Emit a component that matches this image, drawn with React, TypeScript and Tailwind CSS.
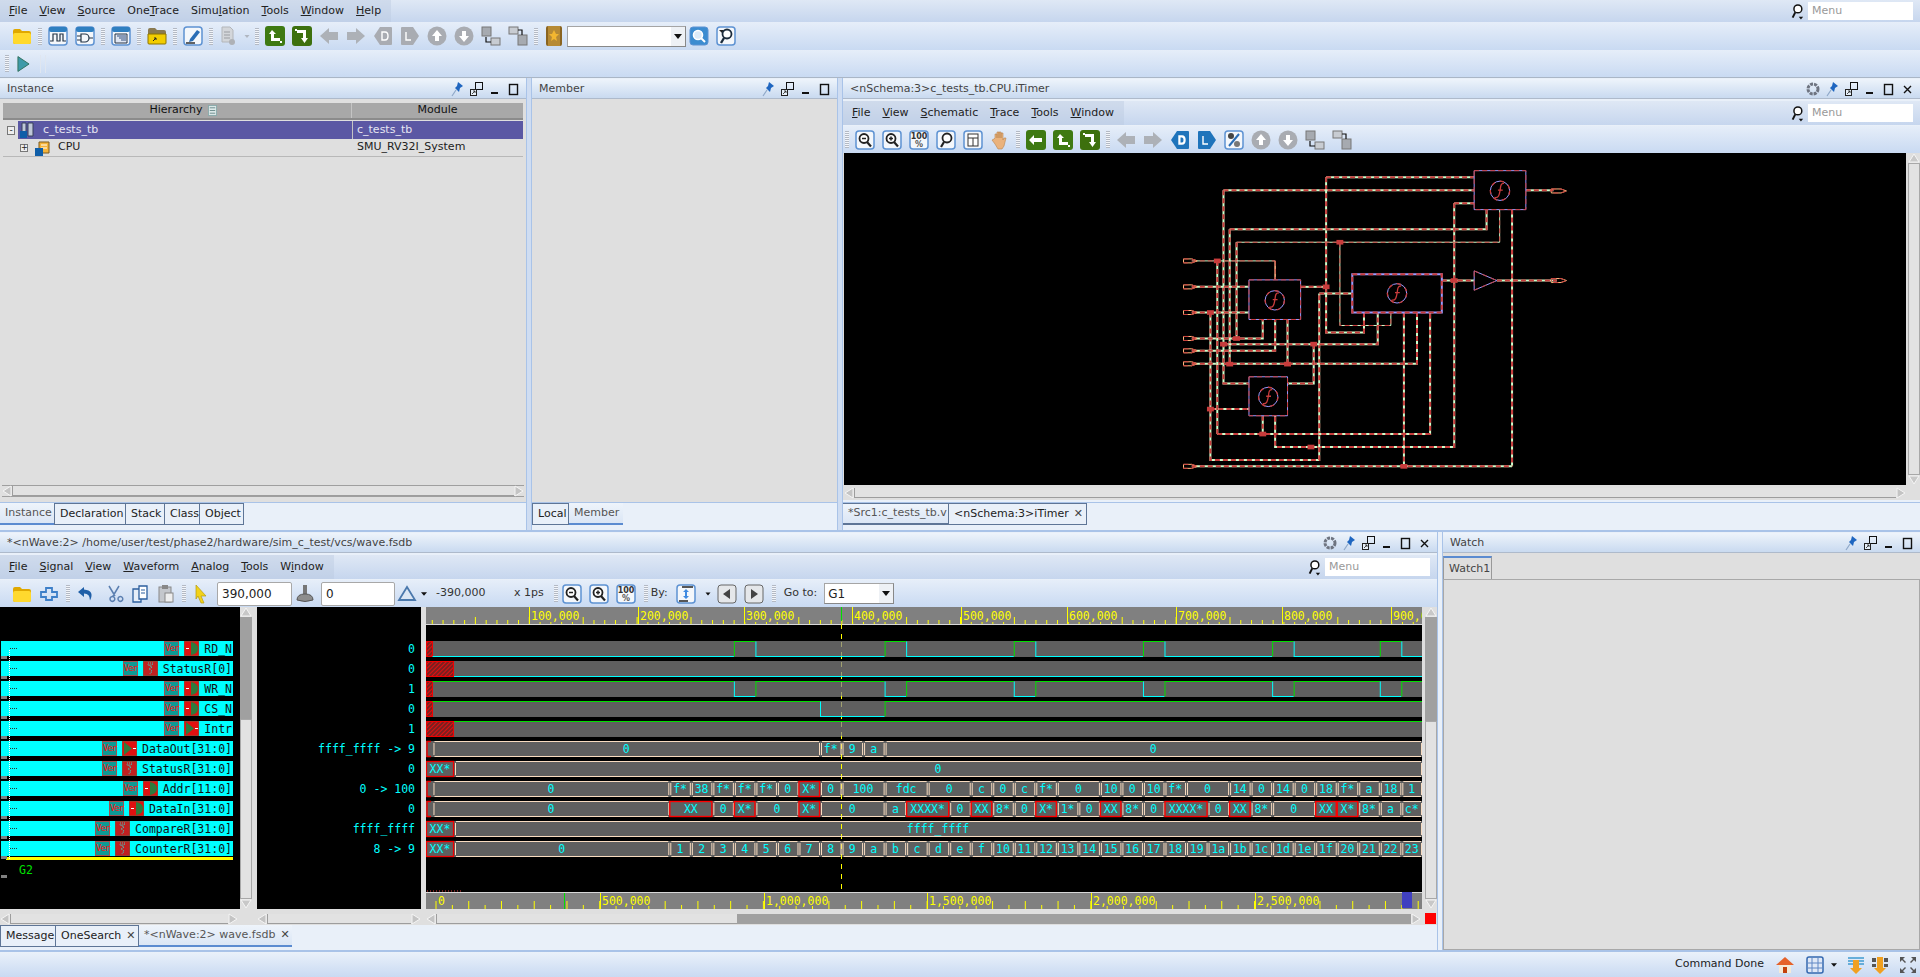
import React from "react";

const sans = "font-['DejaVu_Sans',sans-serif]";
const mono = "font-['DejaVu_Sans_Mono',monospace]";

const frame = <rect x="1" y="1" width="18" height="18" rx="3" fill="#f4f7fb" stroke="#5d92d2" strokeWidth="1.5" />;
const glass = (extra?: React.ReactNode) => (
  <>
    {frame}
    <circle cx="9" cy="8.5" r="4.5" fill="#fff" stroke="#222" strokeWidth="1.8" />
    <path d="M12 12l4 4.5" stroke="#222" strokeWidth="2.2" />
    {extra}
  </>
);

const icons: Record<string, React.ReactNode> = {
  folder: <><path d="M1 5q0-2 2-2h5l2 2h7q2 0 2 2v9q0 2-2 2H3q-2 0-2-2z" fill="#e0a800" /><path d="M1 9q0-2 2-2h14q2 0 2 2v7q0 2-2 2H3q-2 0-2-2z" fill="#ffd92e" /></>,
  wave: <>{frame}<rect x="1" y="1" width="18" height="5" rx="2" fill="#2f7fc0" /><path d="M2 15h3V8h4v7h3V8h3v7h3" fill="none" stroke="#234" strokeWidth="1.2" /></>,
  gate: <>{frame}<rect x="1" y="1" width="18" height="5" rx="2" fill="#2f7fc0" /><path d="M6 8h4a4 4 0 010 8H6zM2 10h4M2 14h4M14 12h4" fill="none" stroke="#234" strokeWidth="1.2" /></>,
  list: <>{frame}<rect x="1" y="1" width="18" height="5" rx="2" fill="#2f7fc0" /><path d="M4 8h12v9H4z" fill="#dfe6f3" stroke="#234" /><path d="M6 10h9M8 12h7M10 14h5" stroke="#35507f" strokeWidth="1.2" /></>,
  ofolder: <><path d="M1 4q0-2 2-2h5l2 2h7q2 0 2 2v11H1z" fill="#8a7a50" /><path d="M1 8h18v9q0 1-1 1H2q-1 0-1-1z" fill="#f2cd00" stroke="#8d7400" /><path d="M6 15l3-3M7 12h2v2" stroke="#222" fill="none" /></>,
  edit: <>{frame}<path d="M7 13l7-9 3 2-7 9-4 1z" fill="#2a6db5" /><path d="M3 17h9" stroke="#222" strokeWidth="1.4" /></>,
  doc: <><path d="M3 1h8l3 3v12H3z" fill="#d3d6da" stroke="#b3b6ba" /><path d="M5 6h6M5 9h6M5 12h6" stroke="#9a9da2" /><circle cx="13" cy="16" r="3" fill="#aeb1b6" /></>,
  grayDrop: <path d="M5 8h10l-5 6z" fill="#b0b6c0" />,
  gUp: <><rect x="0" y="0" width="20" height="20" rx="3" fill="#3f7a12" /><path d="M7 4l-3 4h2v7h9v-3H9V8h2z" fill="#fff" /><rect x="15" y="15" width="2" height="2" fill="#fff" /></>,
  gDown: <><rect x="0" y="0" width="20" height="20" rx="3" fill="#3d700e" /><path d="M5 4h9v8h2l-3.5 5L9 12h2V7H5z" fill="#fff" /><rect x="3" y="3" width="2" height="2" fill="#fff" /></>,
  gLeft: <><rect x="0" y="0" width="20" height="20" rx="3" fill="#3f7a12" /><path d="M3 10l5-5v3h8v4H8v3z" fill="#fff" /></>,
  aLeft: <path d="M1 10l9-8v4h9v8h-9v4z" fill="#adb1b7" />,
  aRight: <path d="M19 10l-9-8v4H1v8h9v4z" fill="#adb1b7" />,
  tagD: <><path d="M1 10l6-9h11q1 0 1 1v16q0 1-1 1H7z" fill="#a9acb2" /><path d="M9 6h3q3 0 3 4t-3 4H9z" fill="none" stroke="#fff" strokeWidth="1.4" /></>,
  tagL: <><path d="M19 10l-6-9H2Q1 1 1 2v16q0 1 1 1h11z" fill="#a9acb2" /><path d="M6 6v8h5" fill="none" stroke="#fff" strokeWidth="1.4" /></>,
  tagDb: <><path d="M1 10l6-9h11q1 0 1 1v16q0 1-1 1H7z" fill="#1f74bb" /><path d="M9 6h3q3 0 3 4t-3 4H9z" fill="#fff" stroke="#fff" strokeWidth="1.4" /><path d="M10.500 7.500h1.500q1.500 0 1.500 2.500t-1.500 2.500h-1.500z" fill="#1f74bb" /></>,
  tagLb: <><path d="M19 10l-6-9H2Q1 1 1 2v16q0 1 1 1h11z" fill="#1f74bb" /><path d="M6 6v8h5" fill="none" stroke="#fff" strokeWidth="1.4" /></>,
  cUp: <><circle cx="10" cy="10" r="9.5" fill="#a9acb2" /><path d="M10 4l5 6h-3v5H8v-5H5z" fill="#fff" /></>,
  cDown: <><circle cx="10" cy="10" r="9.5" fill="#a9acb2" /><path d="M10 16l5-6h-3V5H8v5H5z" fill="#fff" /></>,
  hierA: <><rect x="1" y="1" width="9" height="9" fill="#a6aab0" stroke="#777" /><rect x="10" y="12" width="9" height="7" fill="#c8ccd2" stroke="#777" /><path d="M5 11v5h5" fill="none" stroke="#111" strokeWidth="1.2" /></>,
  hierB: <><rect x="1" y="1" width="9" height="7" fill="#c8ccd2" stroke="#777" /><rect x="10" y="9" width="9" height="10" fill="#a6aab0" stroke="#777" /><path d="M10 4h4v5" fill="none" stroke="#111" strokeWidth="1.2" /></>,
  book: <><rect x="2" y="0" width="16" height="20" rx="2" fill="#8a6420" /><rect x="4" y="0" width="12" height="20" fill="#b68a35" /><path d="M10 4l2 4h3l-3 3 1 4-3-2-3 2 1-4-3-3h3z" fill="#f2b630" /></>,
  findQ: <><rect x="1" y="1" width="18" height="18" rx="3" fill="#3c8cd0" stroke="#5d92d2" /><circle cx="9" cy="9" r="4.5" fill="#dcebf8" stroke="#fff" strokeWidth="1.6" /><path d="M12 12l4 4" stroke="#fff" strokeWidth="2" /></>,
  findP: <>{frame}<path d="M3 4h5l-2 3z" fill="#222" /><circle cx="11" cy="8" r="4.5" fill="#fff" stroke="#1b2b3b" strokeWidth="1.8" /><path d="M8 12l-3 5" stroke="#1b2b3b" strokeWidth="2.4" /></>,
  zOut: glass(<path d="M7 8.5h4" stroke="#222" strokeWidth="1.5" />),
  zIn: glass(<path d="M7 8.5h4M9 6.5v4" stroke="#222" strokeWidth="1.5" />),
  z100: <>{frame}<text x="10" y="9" textAnchor="middle" fontSize="8" fontWeight="700" fontFamily="DejaVu Sans" fill="#333">100</text><text x="10" y="17" textAnchor="middle" fontSize="8" fontWeight="700" fontFamily="DejaVu Sans" fill="#555">%</text></>,
  zFit: <>{frame}<circle cx="11" cy="8" r="4.5" fill="#fff" stroke="#222" strokeWidth="1.8" /><path d="M8 12l-3 5" stroke="#222" strokeWidth="2.2" /></>,
  zBox: <>{frame}<rect x="5" y="4" width="10" height="12" fill="#fff" stroke="#333" /><path d="M5 8h10M10 8v8" stroke="#333" /></>,
  hand: <path d="M5 8V4h2v4V2h2v6V2h2v6V3h2v7l1-2h2l-2 8-2 3H8l-3-5-3-4 2-1z" fill="#eab27c" stroke="#b9844f" strokeWidth=".6" />,
  trace: <>{frame}<circle cx="7" cy="6" r="3" fill="#444" /><path d="M5 16L15 4" stroke="#2a6db5" strokeWidth="2" /><circle cx="13" cy="14" r="3" fill="#777" /></>,
  refresh: <path d="M2 8h5V4h6v4h5v5h-5v3H7v-3H2z" fill="none" stroke="#3d7fc8" strokeWidth="1.8" />,
  undo: <path d="M8 3L2 8l6 5V9.5q6 0 6 7 5-10-6-11z" fill="#1f5fa8" />,
  cut: <path d="M5 2l6 10M15 2L9 12M6 15a2.4 2.4 0 100-.1zM14 15a2.4 2.4 0 100-.1z" fill="none" stroke="#5b7fb0" strokeWidth="1.5" />,
  copy: <><path d="M3 5h8v13H3z" fill="#e6eef8" stroke="#2c5f9e" strokeWidth="1.3" /><path d="M9 2h8v13H9z" fill="#fff" stroke="#2c5f9e" strokeWidth="1.3" /><path d="M11 6h4M11 9h4" stroke="#2c5f9e" /></>,
  paste: <><rect x="3" y="3" width="12" height="15" fill="#c4c7cc" stroke="#888" /><rect x="6" y="1" width="6" height="4" fill="#888" /><rect x="9" y="9" width="8" height="9" fill="#eee" stroke="#888" /></>,
  cursor: <path d="M5 1l10 11h-5l3 7-3 0-3-7-2 3z" fill="#f2d21a" stroke="#b59b10" strokeWidth=".7" />,
  gauge: <><rect x="8" y="1" width="4" height="9" fill="#777" /><path d="M2 16q0-6 8-6t8 6q-8 3-16 0z" fill="#8d8d8d" stroke="#555" /></>,
  delta: <path d="M10 3l8 13H2z" fill="#dbe6f4" stroke="#4a78ac" strokeWidth="1.8" />,
  blackDrop: <path d="M5 7h10l-5 6z" fill="#111" />,
  byIcon: <>{frame}<path d="M6 3h11M3 17h9" stroke="#222" strokeWidth="1.6" /><path d="M10 5l3 3h-2v4h2l-3 3-3-3h2V8H7z" fill="#3f8ae0" /></>,
  prev: <><rect x="1" y="1" width="18" height="18" rx="3" fill="#e5e7ea" stroke="#666" /><path d="M13 5v10l-7-5z" fill="#444" /></>,
  next: <><rect x="1" y="1" width="18" height="18" rx="3" fill="#e5e7ea" stroke="#666" /><path d="M7 5v10l7-5z" fill="#444" /></>,
  home: <><path d="M1 10l9-8 9 8z" fill="#e5622a" /><rect x="4" y="10" width="12" height="8" fill="#f3ead8" /><rect x="8" y="12" width="4" height="6" fill="#c2410c" /></>,
  grid: <><rect x="2" y="2" width="16" height="16" rx="2" fill="#dfe8f7" stroke="#3468b0" strokeWidth="1.5" /><path d="M7 3v14M13 3v14M3 8h14M3 13h14" stroke="#5e86c4" /></>,
  arr1: <><path d="M2 3h16M2 6h16M2 9h16" stroke="#3f9ad0" strokeWidth="1.6" /><path d="M7 5h6v8h3l-6 6-6-6h3z" fill="#f0a020" /></>,
  arr2: <><path d="M2 3h4v4H2zM14 3h4v4h-4zM2 9h4v3H2zM14 9h4v3h-4z" fill="#555" /><path d="M7 2h6v11h3l-6 6-6-6h3z" fill="#f0a020" /></>,
  expand: <path d="M2 2h5L5 4l3 3-1 1-3-3-2 2zM18 2v5l-2-2-3 3-1-1 3-3-2-2zM2 18v-5l2 2 3-3 1 1-3 3 2 2zM18 18h-5l2-2-3-3 1-1 3 3 2-2z" fill="#555" />,
};

function Ico({ name, className = "" }: { name: string; className?: string }) {
  return (
    <svg viewBox="0 0 20 20" className={`w-[20px] h-[20px] shrink-0 ${className}`}>
      {icons[name]}
    </svg>
  );
}

function Grip({ className = "" }: { className?: string }) {
  return <div className={`w-[4px] h-[17px] -mx-[1px] shrink-0 bg-[repeating-linear-gradient(180deg,#b3b9c4_0,#b3b9c4_1px,#f2f5fa_1px,#f2f5fa_2px)] ${className}`} />;
}

function Toolbar({ items, className = "" }: { items: string[]; className?: string }) {
  return (
    <div className={`flex items-center gap-[7px] ${className}`}>
      {items.map((it, i) => (it === "|" ? <Grip key={i} /> : <Ico key={i} name={it} />))}
    </div>
  );
}

function MenuBar({ items, className = "", children }: { items: [string, string, string][]; className?: string; children?: React.ReactNode }) {
  return (
    <div className={`flex items-center text-[11px] text-[#222] bg-gradient-to-b from-[#dfe8f5] to-[#c6d6ee] ${className}`}>
      <div className="flex items-center h-full bg-[#b9c8de]/40 pl-[9px] pr-[10px]">
        {items.map(([a, u, b], i) => (
          <span key={i} className="whitespace-pre mr-[12px] last:mr-0">
            {a}
            <span className="underline">{u}</span>
            {b}
          </span>
        ))}
      </div>
      {children}
    </div>
  );
}

function MenuSearch() {
  return (
    <div className="ml-auto flex items-center pr-[7px] h-full">
      <svg viewBox="0 0 16 18" className="w-[14px] h-[17px] mr-[4px]">
        <circle cx="9" cy="6" r="4.5" fill="#fff" stroke="#111" strokeWidth="1.7" />
        <path d="M6 10l-3 6" stroke="#111" strokeWidth="2.2" />
        <path d="M10 15h5l-2.5 3z" fill="#111" />
      </svg>
      <div className="w-[105px] h-[18px] bg-white text-[#999] pl-[4px] leading-[18px] text-[11px]">Menu</div>
    </div>
  );
}

function HeaderBtn({ kind }: { kind: string }) {
  return (
    <svg viewBox="0 0 14 16" className="w-[14px] h-[16px]">
      {kind === "gear" && <><circle cx="7" cy="8" r="5" fill="none" stroke="#6e7480" strokeWidth="3" strokeDasharray="3 1" /></>}
      {kind === "pin" && <><path d="M8 1l5 4-3 2-1 4-4-4 2-2z" fill="#1f66c0" /><path d="M6 9l-4 6" stroke="#8fa8c8" strokeWidth="1.2" /></>}
      {kind === "float" && <><rect x="6.5" y="1.5" width="7" height="7" fill="none" stroke="#111" /><rect x="1.5" y="8.5" width="6" height="6" fill="#e7f0f9" stroke="#222" /><path d="M3 13l3-3M4 10h2v2" stroke="#222" fill="none" strokeWidth=".8" /></>}
      {kind === "min" && <rect x="3" y="11" width="7" height="2" fill="#111" />}
      {kind === "max" && <rect x="2.5" y="3.5" width="8" height="10" fill="none" stroke="#111" strokeWidth="1.4" />}
      {kind === "close" && <path d="M3 5l7 7M10 5l-7 7" stroke="#111" strokeWidth="1.4" />}
    </svg>
  );
}

function Header({ title, btns }: { title: string; btns: string[] }) {
  return (
    <div className="h-[20px] mt-px shrink-0 flex items-center pl-[7px] pr-[5px] text-[11px] text-[#444] bg-gradient-to-b from-[#eef4fb] to-[#c9daf0] border-b border-[#aebacb]">
      <span className="whitespace-pre pt-[2px]">{title}</span>
      <div className="ml-auto flex items-center gap-[5px]">
        {btns.map((b, i) => <HeaderBtn key={i} kind={b} />)}
      </div>
    </div>
  );
}

function Tabs({ tabs, className = "" }: { tabs: { label: string; active?: boolean; close?: boolean; w: string }[]; className?: string }) {
  return (
    <div className={`h-[24px] shrink-0 flex items-start bg-[#e9f0f9] text-[11px] border-t border-[#a9c3e8] ${className}`}>
      {tabs.map((t, i) => (
        <div
          key={i}
          className={`h-[22px] flex items-center pl-[5px] whitespace-pre ${t.w} ${
            t.active
              ? "text-[#555] bg-gradient-to-b from-[#eef4fb] to-[#dbe6f5] border-b-2 border-[#5b8bd0]"
              : "text-[#222] border border-[#5e7596] border-t-[#5e7596] -ml-px first:ml-0"
          }`}
        >
          {t.label}
          {t.close && <span className="ml-[5px] text-[#444]">✕</span>}
        </div>
      ))}
    </div>
  );
}

function HScroll({ className = "", thumb = "flex-1", track }: { className?: string; thumb?: string; track?: boolean }) {
  return (
    <div className={`h-[12px] shrink-0 flex items-center bg-[#dfdfdf] ${className}`}>
      <svg viewBox="0 0 10 12" className="w-[10px] h-[12px] shrink-0"><path d="M9 1v10L1 6z" fill="#c4c4c4" stroke="#f5f5f5" /></svg>
      <div className={`flex h-[10px] min-w-0 ${track ? "flex-1 bg-[#a0a0a0]" : "flex-1"}`}>
        <div className={`h-full bg-[#e2e2e2] border-b border-[#9d9d9d] border-l border-l-[#9d9d9d] ${thumb}`} />
      </div>
      <svg viewBox="0 0 10 12" className="w-[10px] h-[12px] shrink-0"><path d="M1 1v10l8-5z" fill="#c4c4c4" stroke="#f5f5f5" /></svg>
    </div>
  );
}

function VScroll({ gray = 0, className = "" }: { gray?: number; className?: string }) {
  return (
    <div className={`w-[12px] shrink-0 flex flex-col bg-[#dfdfdf] ${className}`}>
      <svg viewBox="0 0 12 10" className="w-[12px] h-[10px] shrink-0"><path d="M1 9h10L6 1z" fill="#c8c8c8" stroke="#f5f5f5" /></svg>
      {gray > 0 && <div className="bg-[#a0a0a0] shrink-0" style={{ height: gray }} />}
      <div className="flex-1 bg-[#e2e2e2] border border-[#a8a8a8]" />
      <svg viewBox="0 0 12 10" className="w-[12px] h-[10px] shrink-0"><path d="M1 1h10L6 9z" fill="#c8c8c8" stroke="#f5f5f5" /></svg>
    </div>
  );
}

function Combo({ text, className = "" }: { text?: string; className?: string }) {
  return (
    <div className={`h-[21px] flex items-center bg-white border border-[#a5a5a5] border-r-[#888] border-b-[#888] text-[12px] text-[#222] ${className}`}>
      <span className="flex-1 pl-[3px]">{text}</span>
      <div className="w-[14px] h-full bg-[#eef1f5] flex items-center justify-center">
        <svg viewBox="0 0 10 6" className="w-[8px] h-[5px]"><path d="M0 0h10L5 6z" fill="#111" /></svg>
      </div>
    </div>
  );
}

/* Schematic, in coordinates of a stretched crop: the viewBox maps them back */
function W({ d, thin, base }: { d: string; thin?: boolean; base?: string }) {
  const w = thin ? 1 : 2;
  return (
    <>
      <path d={d} fill="none" stroke={base || "#ccffcc"} strokeWidth={w} vectorEffect="non-scaling-stroke" />
      <path d={d} fill="none" stroke="#c83c3c" strokeWidth={w} strokeDasharray="5 3" vectorEffect="non-scaling-stroke" />
    </>
  );
}

function Block({ x, y, x2, y2, thick }: { x: number; y: number; x2: number; y2: number; thick?: boolean }) {
  const cx = (x + x2) / 2;
  const cy = (y + y2) / 2 + (thick ? 0 : 2);
  const d = `M${x},${y}H${x2}V${y2}H${x}Z`;
  return (
    <>
      <path d={d} fill="#000" stroke="#9a9aff" strokeWidth={thick ? 2 : 1} vectorEffect="non-scaling-stroke" />
      <path d={d} fill="none" stroke="#c83c3c" strokeWidth={thick ? 2 : 1} strokeDasharray="5 3" vectorEffect="non-scaling-stroke" />
      <ellipse cx={cx} cy={cy} rx="14" ry="29" fill="none" stroke="#9a9aff" vectorEffect="non-scaling-stroke" />
      <ellipse cx={cx} cy={cy} rx="14" ry="29" fill="none" stroke="#c83c3c" strokeWidth="1.3" strokeDasharray="4 5" vectorEffect="non-scaling-stroke" />
      <path d={`M${cx + 6},${cy - 22}C${cx},${cy - 24} ${cx + 1},${cy - 8} ${cx},${cy}C${cx - 1},${cy + 12} ${cx - 2},${cy + 23} ${cx - 8},${cy + 20}M${cx - 3},${cy - 2}H${cx + 4}`} fill="none" stroke="#c83c3c" strokeWidth="1.3" vectorEffect="non-scaling-stroke" />
    </>
  );
}

const thickWires = [
  "M705,321H920", "M705,321V787H760V727", "M556,360H920", "M556,360V940H593", "M565,477H938V418", "M565,477V882",
  "M575,516V805", "M891,399H920", "M891,399V1131H631V1037", "M975,418V1189", "M510,1189H975",
  "M510,650H593", "M510,727H600", "M537,727V1170H695V670", "M537,1017H600", "M668,650H705",
  "M510,805H613V748", "M510,842H631V748", "M510,881H837V727", "M556,822H780V727", "M687,822V940H649",
  "M873,631H920", "M953,631H1040", "M995,360H1035", "M613,1037V1092", "M818,727V1189", "M547,1092H856V727", "M547,572V1092",
  "M649,881V748", "M695,670H748",
];
const thinWires = ["M575,516H957V418", "M510,572H631V629", "M725,516V766H799V727"];
const junctions = [[547, 572], [537, 727], [575, 805], [556, 822], [687, 822], [565, 882], [649, 882], [537, 1017], [613, 1092], [683, 1131], [818, 1189], [725, 516], [705, 650], [891, 631]];
const portsLeft = [572, 650, 727, 805, 842, 881, 1189];

function Schematic() {
  return (
    <svg viewBox="5 248 1542 997" preserveAspectRatio="none" className="w-full h-full block bg-black">
      {thickWires.map((d) => <W key={d} d={d} />)}
      {thinWires.map((d) => <W key={d} d={d} thin />)}
      <W d="M631,572V629" thin base="#ffc080" />
      <Block x={920} y={301} x2={995} y2={418} />
      <Block x={593} y={629} x2={668} y2={748} />
      <Block x={743} y={612} x2={873} y2={727} thick />
      <Block x={593} y={920} x2={649} y2={1037} />
      <path d="M920,602L953,631L920,660Z" fill="#000" stroke="#9a9aff" vectorEffect="non-scaling-stroke" />
      <path d="M920,602L953,631L920,660Z" fill="none" stroke="#c83c3c" strokeDasharray="5 4" vectorEffect="non-scaling-stroke" />
      {portsLeft.map((y) => <W key={y} thin base="#ffc080" d={`M498,${y - 6}H510L518,${y}L510,${y + 6}H498Z`} />)}
      {[362, 631].map((y) => <W key={y} thin base="#ffc080" d={`M1032,${y - 6}H1046L1054,${y}L1046,${y + 6}H1032Z`} />)}
      {junctions.map(([x, y]) => <rect key={`${x}-${y}`} x={x - 5} y={y - 7} width="10" height="14" fill="#c83c3c" />)}
    </svg>
  );
}

/* Waveform data */
const K = (k: number) => (k >= 100 ? 1422 : 669.3 + 21.53 * k);
const rowY = (i: number) => 641 + 20 * i;
const END = 100;

type Seg = [number, number, string, boolean?];
const hex = (n: number) => n.toString(16);
const rows: Record<number, Seg[]> = {
  5: [[-11, 7, "0"], [7, 8, "f*"], [8, 9, "9"], [9, 10, "a"], [10, END, "0"]],
  6: [[-10, END, "0"]],
  7: [[-11, 0, "0"], [0, 1, "f*"], [1, 2, "38"], [2, 3, "f*"], [3, 4, "f*"], [4, 5, "f*"], [5, 6, "0"], [6, 7, "X*", true], [7, 8, "0"], [8, 10, "100"], [10, 12, "fdc"], [12, 14, "0"], [14, 15, "c"], [15, 16, "0"], [16, 17, "c"], [17, 18, "f*"], [18, 20, "0"], [20, 21, "10"], [21, 22, "0"], [22, 23, "10"], [23, 24, "f*"], [24, 26, "0"], [26, 27, "14"], [27, 28, "0"], [28, 29, "14"], [29, 30, "0"], [30, 31, "18"], [31, 32, "f*"], [32, 33, "a"], [33, 34, "18"], [34, END, "1"]],
  8: [[-11, 0, "0"], [0, 2, "XX", true], [2, 3, "0"], [3, 4, "X*", true], [4, 6, "0"], [6, 7, "X*", true], [7, 10, "0"], [10, 11, "a"], [11, 13, "XXXX*", true], [13, 14, "0"], [14, 15, "XX", true], [15, 16, "8*"], [16, 17, "0"], [17, 18, "X*", true], [18, 19, "1*"], [19, 20, "0"], [20, 21, "XX", true], [21, 22, "8*"], [22, 23, "0"], [23, 25, "XXXX*", true], [25, 26, "0"], [26, 27, "XX", true], [27, 28, "8*"], [28, 30, "0"], [30, 31, "XX", true], [31, 32, "X*", true], [32, 33, "8*"], [33, 34, "a"], [34, END, "c*"]],
  9: [[-10, END, "ffff_ffff"]],
  10: [[-10, 0, "0"], ...Array.from({ length: 35 }, (_, k): Seg => [k, k === 34 ? END : k + 1, hex(k + 1)])],
};
const xStart = [5, 7, 8]; // buses that open with a short red stub, the rest with XX*
const toggles = [3, 4, 10, 11, 16, 17, 22, 23, 28, 29, 33, 34];

function Bit({ i, start, high, edges }: { i: number; start: number; high: boolean; edges: number[] }) {
  const y = rowY(i);
  const top = y + 0.5;
  const bot = y + 15.5;
  const parts: React.ReactNode[] = [];
  let x = start;
  let lvl = high;
  [...edges.map(K), 1422].forEach((ex, n) => {
    parts.push(<line key={`h${n}`} x1={x} x2={ex} y1={lvl ? top : bot} y2={lvl ? top : bot} stroke={lvl ? "#00e000" : "#00ffff"} />);
    if (ex < 1422) {
      lvl = !lvl;
      parts.push(<line key={`v${n}`} x1={ex + 0.5} x2={ex + 0.5} y1={top} y2={bot} stroke={lvl ? "#00e000" : "#00ffff"} />);
    }
    x = ex;
  });
  return <>{parts}</>;
}

function BusSeg({ i, seg }: { i: number; seg: Seg }) {
  const [a, b, label, red] = seg;
  const x1 = K(a);
  const x2 = K(b);
  const y = rowY(i);
  const tx = (x1 + x2) / 2;
  return (
    <g>
      {red ? (
        <rect x={x1 + 0.5} y={y + 0.5} width={x2 - x1 - 1} height="15" fill="none" stroke="#ff0000" strokeWidth="1.4" />
      ) : (
        <path d={`M${x1 + 2},${y + 0.5}H${x2 - 1}M${x1 + 2},${y + 15.5}H${x2 - 1}M${x1 + 1.5},${y + 2}V${y + 14}M${x2 - 0.5},${y + 2}V${y + 14}`} fill="none" stroke="#f8dcc0" />
      )}
      <text x={tx} y={y + 12} textAnchor="middle" fill="#00ffff" fontSize="11.5" className={mono}>{label}</text>
    </g>
  );
}

function WaveView() {
  const rulerLabels: [number, string][] = [[529, "100,000"], [638, "200,000"], [744, "300,000"], [852, "400,000"], [961, "500,000"], [1067, "600,000"], [1176, "700,000"], [1282, "800,000"], [1391, "900,000"]];
  const ovLabels: [number, string][] = [[600, "500,000"], [764, "1,000,000"], [927, "1,500,000"], [1091, "2,000,000"], [1255, "2,500,000"]];
  const cursorX = 841.5;
  return (
    <svg viewBox="426 607 996 302" className="w-[996px] h-[302px] block shrink-0 bg-black">
      <defs>
        <pattern id="hatch" width="3" height="3" patternUnits="userSpaceOnUse" patternTransform="rotate(45)">
          <rect width="3" height="3" fill="#7a2020" />
          <rect width="1" height="3" fill="#e01010" />
        </pattern>
      </defs>
      {/* ruler */}
      <rect x="426" y="607" width="996" height="17" fill="#808080" />
      <line x1="426" x2="1422" y1="624.5" y2="624.5" stroke="#d8d8d8" />
      {Array.from({ length: 93 }, (_, n) => {
        const x = 421.5 + 10.78 * n;
        return <line key={n} x1={x} x2={x} y1={n % 5 === 0 ? 617 : 620} y2="624" stroke="#ffff00" />;
      })}
      {rulerLabels.map(([x, t]) => (
        <g key={t}>
          <line x1={x + 0.5} x2={x + 0.5} y1="607" y2="624" stroke="#ffff00" />
          <rect x={x + 1} y="608" width="50" height="14" fill="#808080" />
          <text x={x + 2} y="620" fill="#ffff00" fontSize="11.5" className={mono}>{t}</text>
        </g>
      ))}
      <line x1={cursorX} x2={cursorX} y1="607" y2="621" stroke="#00e000" />
      {/* signal rows */}
      {Array.from({ length: 11 }, (_, i) => <rect key={i} x="426" y={rowY(i)} width="996" height="16" fill="#5f5f5f" />)}
      <line x1={cursorX} x2={cursorX} y1="624" y2="892" stroke="#ffff00" strokeDasharray="5 5" />
      {[0, 1, 2, 3, 4].map((i) => <rect key={i} x={cursorX - 1} y={rowY(i) + 1} width="2" height="14" fill="#5f5f5f" />)}
      {[0, 1, 2, 3, 4].map((i) => <line key={i} x1={cursorX} x2={cursorX} y1={rowY(i) + 1} y2={rowY(i) + 15} stroke="#a0a070" strokeDasharray="5 5" />)}
      <rect x="426.5" y="641.5" width="6" height="15" fill="url(#hatch)" stroke="#f00000" />
      <rect x="426.5" y="661.5" width="27" height="15" fill="url(#hatch)" stroke="#f00000" />
      <rect x="426.5" y="681.5" width="6" height="15" fill="url(#hatch)" stroke="#f00000" />
      <rect x="426.5" y="701.5" width="6" height="15" fill="url(#hatch)" stroke="#f00000" />
      <rect x="426.5" y="721.5" width="27" height="15" fill="url(#hatch)" stroke="#f00000" />
      <Bit i={0} start={432.5} high={false} edges={toggles} />
      <Bit i={1} start={454} high={false} edges={[]} />
      <Bit i={2} start={432.5} high={true} edges={toggles} />
      <Bit i={3} start={432.5} high={true} edges={[7, 10]} />
      <Bit i={4} start={454} high={true} edges={[]} />
      {Object.entries(rows).map(([key, segs]) => {
        const i = Number(key);
        const y = rowY(i);
        return (
          <g key={key}>
            {xStart.includes(i) ? (
              <path d={`M431,${y + 0.5}H427V${y + 15.5}H431`} fill="none" stroke="#f00000" strokeWidth="1.4" />
            ) : (
              <>
                <rect x="426.5" y={y + 0.5} width="27" height="15" fill="none" stroke="#f00000" strokeWidth="1.3" />
                <text x="440" y={y + 12} textAnchor="middle" fill="#00ffff" fontSize="11.5" className={mono}>XX*</text>
              </>
            )}
            {segs.map((s, n) => <BusSeg key={n} i={i} seg={s} />)}
          </g>
        );
      })}
      {/* overview ruler */}
      <rect x="426" y="892" width="996" height="17" fill="#808080" />
      <line x1="426" x2="1422" y1="892.5" y2="892.5" stroke="#d8d8d8" />
      <line x1="427" x2="463" y1="891" y2="891" stroke="#e04040" strokeDasharray="1 2" />
      {Array.from({ length: 62 }, (_, n) => {
        const x = 436 + 16.37 * n;
        return <line key={n} x1={x} x2={x} y1={n % 2 === 0 ? 901 : 905} y2="909" stroke="#ffff00" />;
      })}
      <rect x="437" y="893" width="8" height="14" fill="#808080" />
      <text x="438" y="905" fill="#ffff00" fontSize="11.5" className={mono}>0</text>
      <line x1="564.5" x2="564.5" y1="893" y2="909" stroke="#00e000" />
      {ovLabels.map(([x, t]) => (
        <g key={t}>
          <line x1={x + 0.5} x2={x + 0.5} y1="893" y2="909" stroke="#ffff00" />
          <rect x={x + 1} y="894" width={t.length * 7} height="12" fill="#808080" />
          <text x={x + 2} y="905" fill="#ffff00" fontSize="11.5" className={mono}>{t}</text>
        </g>
      ))}
      <rect x="1402" y="892" width="10" height="16" fill="#4040c0" />
    </svg>
  );
}

const signals: [string, string, string][] = [
  ["RD_N", "r", "0"],
  ["StatusR[0]", "w", "0"],
  ["WR_N", "r", "1"],
  ["CS_N", "r", "0"],
  ["Intr", "l", "1"],
  ["DataOut[31:0]", "l", "ffff_ffff -> 9"],
  ["StatusR[31:0]", "w", "0"],
  ["Addr[11:0]", "r", "0 -> 100"],
  ["DataIn[31:0]", "r", "0"],
  ["CompareR[31:0]", "w", "ffff_ffff"],
  ["CounterR[31:0]", "w", "8 -> 9"],
];

function SigIcon({ kind }: { kind: string }) {
  return (
    <svg viewBox="0 0 15 15" className="w-[15px] h-[15px] shrink-0 ml-[5px]">
      <rect width="15" height="15" fill={kind === "w" ? "#c02020" : "#e01010"} stroke="#2f8a60" strokeWidth=".6" />
      {kind === "r" && <><path d="M7 1q7 1 7 6.5T7 14z" fill="#2f7a3c" /><path d="M2 7.5h3" stroke="#fff" /></>}
      {kind === "l" && <><path d="M2 1l8 6.500-8 6.500z" fill="#2f7a3c" /><path d="M11 7.500h3" stroke="#fff" /></>}
      {kind === "w" && <path d="M5 2h5l-1 2H6l3 2-3 2 3 2-2 3" fill="none" stroke="#50b8b0" strokeWidth="1.2" strokeDasharray="1 1" />}
    </svg>
  );
}

function SignalPanel() {
  return (
    <div className="w-[240px] shrink-0 h-[302px] bg-black pt-[34px] relative overflow-hidden">
      {signals.map(([name, icon]) => (
        <div key={name} className="relative ml-px w-[232px] h-[15px] mb-[5px] bg-[#00ffff] flex items-center justify-end overflow-hidden">
          <div className="absolute left-[9px] top-[7px] w-[7px] border-t border-dotted border-[#333]" />
          <div className={`h-[15px] w-[15px] shrink-0 bg-[#0d9a94] border border-[#a05050] text-[#ff1010] text-[9px] tracking-[-1px] leading-[12px] text-center ${mono}`}>Ver</div>
          <SigIcon kind={icon} />
          <span className={`ml-[5px] text-[11.5px] leading-[15px] pt-px text-[#111] pr-px whitespace-pre ${mono}`}>{name}</span>
        </div>
      ))}
      <div className="-mt-[4px] ml-[6px] w-[227px] h-[3px] bg-[#ffff00]" />
      <div className={`pl-[19px] mt-[2px] text-[11.5px] text-[#00e000] ${mono}`}>G2</div>
      {/* tree marks over the rows */}
      {signals.map(([name], i) => <div key={name} className="absolute left-px w-[6px] h-[3px] bg-[#808080]" style={{ top: 49 + i * 20 }} />)}
      <div className="absolute left-px top-[268px] w-[6px] h-[3px] bg-[#808080]" />
      <div className="absolute left-[9px] top-[43px] h-[209px] border-l border-dotted border-white" />
    </div>
  );
}

function ValuePanel() {
  return (
    <div className="w-[164px] shrink-0 h-[302px] bg-black pt-[34px]">
      {signals.map(([name, , v]) => (
        <div key={name} className={`h-[20px] leading-[17px] pr-[6px] text-right text-[#00ffff] text-[11.5px] whitespace-pre ${mono}`}>{v}</div>
      ))}
    </div>
  );
}

const BTNS = ["pin", "float", "min", "max"];

export default function App() {
  return (
    <div className={`w-[1920px] h-[977px] overflow-hidden flex flex-col bg-[#e9f0f9] ${sans}`}>
      <MenuBar
        className="h-[22px] shrink-0"
        items={[["", "F", "ile"], ["", "V", "iew"], ["", "S", "ource"], ["One", "T", "race"], ["Simu", "l", "ation"], ["", "T", "ools"], ["", "W", "indow"], ["", "H", "elp"]]}
      >
        <MenuSearch />
      </MenuBar>
      <div className="h-[28px] shrink-0 flex items-center pl-[12px] bg-gradient-to-b from-[#e6eef9] to-[#c9daf2]">
        <Toolbar items={["folder", "|", "wave", "gate", "|", "list", "|", "ofolder", "|", "edit", "|", "doc"]} />
        <Ico name="grayDrop" className="ml-[3px] !w-[10px]" />
        <Grip className="ml-[3px]" />
        <Toolbar className="ml-[7px]" items={["gUp", "gDown", "aLeft", "aRight", "tagD", "tagL", "cUp", "cDown", "hierA", "hierB", "|", "book"]} />
        <Combo className="ml-[3px] w-[119px]" />
        <Toolbar className="ml-[3px]" items={["findQ", "findP"]} />
      </div>
      <div className="h-[27px] shrink-0 flex items-center pl-[5px] bg-gradient-to-b from-[#e6eef9] to-[#c9daf2]">
        <Grip className="!mx-0" />
        <svg viewBox="0 0 14 18" className="w-[13px] h-[18px] ml-[8px]"><path d="M1 1l12 8L1 17z" fill="#3f9aa8" stroke="#2f6f5a" /></svg>
        <div className="ml-[10px] w-[6px] h-[18px] border-x border-[#dfe6f0]" />
      </div>

      {/* Upper row */}
      <div className="h-[453px] shrink-0 flex border-t border-[#aab6c6] bg-[#cfddf2]">
        <section className="w-[527px] shrink-0 flex flex-col border-r border-[#a9c3e8] bg-[#e9f0f9]">
          <Header title="Instance" btns={BTNS} />
          <div className="flex-1 bg-[#dfdfdf] flex flex-col pt-[4px] pl-[2px] pr-[2px] text-[11px]">
            <div className="flex h-[17px] ml-px mr-px bg-[#a8a8a8] text-[#111] border-b-2 border-[#8b8b8b]">
              <div className="w-[349px] flex items-center justify-center pl-[12px] border-r border-[#c4c4c4]">
                Hierarchy
                <svg viewBox="0 0 10 12" className="w-[9px] h-[11px] ml-[5px]"><rect x=".5" y=".5" width="9" height="11" fill="#dce8e8" stroke="#8aa" /><path d="M2 3h6M2 6h6M2 9h6" stroke="#688" /></svg>
              </div>
              <div className="flex-1 flex items-center justify-center">Module</div>
            </div>
            <div className="flex h-[18px] ml-px mr-px mt-px text-[#e6e6f2]">
              <div className="w-[349px] shrink-0 flex items-center">
                <div className="w-[15px] shrink-0 flex items-center pl-[4px]">
                  <div className="w-[8px] h-[9px] border border-[#777] bg-[#eee] text-[#222] text-[9px] leading-[6px] text-center">-</div>
                </div>
                <div className="flex-1 h-full flex items-center bg-[#5b58a4]">
                  <svg viewBox="0 0 16 16" className="w-[16px] h-[16px] ml-[2px]"><path d="M2 1h4v13H2zM8 1h5v13H8z" fill="#bfc8d8" stroke="#38405a" /><rect y="9" width="7" height="7" fill="#0f5ea8" /></svg>
                  <span className="ml-[7px]">c_tests_tb</span>
                </div>
              </div>
              <div className="flex-1 flex items-center pl-[4px] bg-[#5b58a4] border-l border-[#c4c4c4]">c_tests_tb</div>
            </div>
            <div className="flex h-[18px] ml-px mr-px text-[#222] border-b border-[#b8b8b8]">
              <div className="w-[349px] shrink-0 flex items-center pl-[17px]">
                <div className="w-[8px] h-[8px] border border-[#777] bg-[#eee] text-[8px] leading-[6px] text-center">+</div>
                <svg viewBox="0 0 16 16" className="w-[16px] h-[16px] ml-[7px]"><path d="M4 2h10v11H4z" fill="#f5b43a" stroke="#7a5a20" /><path d="M6 5h6M6 8h6" stroke="#fff" /><rect y="8" width="8" height="8" fill="#0f5ea8" /></svg>
                <span className="ml-[7px]">CPU</span>
              </div>
              <div className="flex-1 flex items-center pl-[5px] whitespace-pre">SMU_RV32I_System</div>
            </div>
            <div className="flex-1" />
            <HScroll className="mb-[5px] border-y border-[#9f9f9f]" />
          </div>
          <Tabs className="mb-[4px]" tabs={[{ label: "Instance", active: true, w: "w-[55px]" }, { label: "Declaration", w: "w-[72px]" }, { label: "Stack", w: "w-[40px]" }, { label: "Class", w: "w-[36px]" }, { label: "Object", w: "w-[45px]" }]} />
        </section>
        <section className="w-[307px] ml-[4px] shrink-0 flex flex-col border-x border-[#a9c3e8] bg-[#e9f0f9]">
          <Header title="Member" btns={BTNS} />
          <div className="flex-1 bg-[#dfdfdf]" />
          <Tabs className="mb-[4px]" tabs={[{ label: "Local", w: "w-[37px]" }, { label: "Member", active: true, w: "w-[54px]" }]} />
        </section>
        <section className="flex-1 min-w-0 ml-[4px] flex flex-col border-l border-[#a9c3e8] bg-[#e9f0f9]">
          <Header title="<nSchema:3>c_tests_tb.CPU.iTimer" btns={["gear", ...BTNS, "close"]} />
          <MenuBar
            className="h-[24px] mt-[2px] shrink-0"
            items={[["", "F", "ile"], ["", "V", "iew"], ["", "S", "chematic"], ["", "T", "race"], ["", "T", "ools"], ["", "W", "indow"]]}
          >
            <MenuSearch />
          </MenuBar>
          <div className="h-[27px] mt-px shrink-0 flex items-center pl-[3px] bg-gradient-to-b from-[#e6eef9] to-[#c9daf2]">
            <Grip className="mr-[6px]" />
            <Toolbar items={["zOut", "zIn", "z100", "zFit", "zBox", "hand", "|", "gLeft", "gUp", "gDown", "|", "aLeft", "aRight", "tagDb", "tagLb", "trace", "cUp", "cDown", "hierA", "hierB"]} />
          </div>
          <div className="h-[332px] shrink-0 flex bg-[#dfdfdf] pl-px">
            <div className="w-[1062px] shrink-0 h-full"><Schematic /></div>
            <VScroll className="ml-[2px] h-full" />
          </div>
          <HScroll className="h-[15px] pl-px pr-[14px] border-y-[2px] border-[#dfdfdf]" />
          <Tabs className="mt-auto mb-[4px]" tabs={[{ label: "*Src1:c_tests_tb.v", active: true, w: "w-[106px] border-t border-[#5e7596]" }, { label: "<nSchema:3>iTimer", close: true, w: "w-[139px]" }]} />
        </section>
      </div>

      {/* Lower row */}
      <div className="flex-1 min-h-0 flex border-t-2 border-[#a9c3e8] bg-[#e9f0f9]">
        <section className="w-[1438px] shrink-0 flex flex-col border-r border-[#a9c3e8]">
          <Header title="*<nWave:2> /home/user/test/phase2/hardware/sim_c_test/vcs/wave.fsdb" btns={["gear", ...BTNS, "close"]} />
          <MenuBar
            className="h-[24px] mt-[2px] shrink-0"
            items={[["", "F", "ile"], ["", "S", "ignal"], ["", "V", "iew"], ["", "W", "aveform"], ["", "A", "nalog"], ["", "T", "ools"], ["W", "i", "ndow"]]}
          >
            <MenuSearch />
          </MenuBar>
          <div className="h-[27px] mt-px shrink-0 flex items-center text-[11px] text-[#333] bg-gradient-to-b from-[#e6eef9] to-[#c9daf2]">
            <Ico name="folder" className="ml-[12px]" />
            <Ico name="refresh" className="ml-[7px]" />
            <Grip className="ml-[7px]" />
            <Ico name="undo" className="ml-[7px]" />
            <Ico name="cut" className="ml-[8px]" />
            <Ico name="copy" className="ml-[6px]" />
            <Ico name="paste" className="ml-[6px]" />
            <Grip className="ml-[6px]" />
            <Ico name="cursor" className="ml-[6px]" />
            <div className="ml-[6px] w-[75px] h-[24px] bg-white border border-[#a8a8a8] rounded-[2px] pl-[4px] leading-[22px] text-[12px] text-[#222]">390,000</div>
            <Ico name="gauge" className="ml-[3px]" />
            <div className="ml-[6px] w-[74px] h-[24px] bg-white border border-[#a8a8a8] rounded-[2px] pl-[4px] leading-[22px] text-[12px] text-[#222]">0</div>
            <Ico name="delta" className="ml-[2px]" />
            <Ico name="blackDrop" className="ml-[1px] !w-[12px]" />
            <span className="ml-[6px] w-[78px] text-[11px]">-390,000</span>
            <span className="whitespace-pre">x 1ps</span>
            <Grip className="ml-[10px]" />
            <Ico name="zOut" className="ml-[5px]" />
            <Ico name="zIn" className="ml-[7px]" />
            <Ico name="z100" className="ml-[7px]" />
            <Grip className="ml-[8px]" />
            <span className="ml-[4px]">By:</span>
            <Ico name="byIcon" className="ml-[8px]" />
            <Ico name="blackDrop" className="ml-[7px] !w-[10px]" />
            <Ico name="prev" className="ml-[4px]" />
            <Ico name="next" className="ml-[7px]" />
            <Grip className="ml-[8px]" />
            <span className="ml-[9px] whitespace-pre">Go to:</span>
            <Combo text="G1" className="ml-[7px] w-[70px]" />
          </div>
          <div className="h-[305px] shrink-0 flex items-start bg-[#dfdfdf] overflow-hidden">
            <SignalPanel />
            <VScroll gray={102} className="h-[302px]" />
            <div className="w-[5px] shrink-0" />
            <ValuePanel />
            <div className="w-[5px] shrink-0" />
            <WaveView />
            <VScroll gray={104} className="ml-[3px] h-[302px]" />
          </div>
          <div className="h-[13px] shrink-0 flex items-center bg-[#dfdfdf]">
            <HScroll className="w-[238px] shrink-0" />
            <HScroll className="w-[164px] ml-[19px] shrink-0" />
            <HScroll className="w-[995px] ml-[5px] shrink-0" track thumb="w-[301px]" />
            <div className="ml-[4px] w-[11px] h-[11px] bg-[#ff0000]" />
          </div>
          <Tabs
            className="border-t-0"
            tabs={[{ label: "Message", w: "w-[56px]" }, { label: "OneSearch", close: true, w: "w-[84px]" }, { label: "*<nWave:2> wave.fsdb", active: true, close: true, w: "w-[153px]" }]}
          />
        </section>
        <div className="w-[4px] shrink-0" />
        <section className="flex-1 min-w-0 flex flex-col border-l border-[#a9c3e8]">
          <Header title="Watch" btns={BTNS} />
          <div className="flex-1 bg-[#dfdfdf] flex flex-col pt-[3px]">
            <div className="h-[23px] w-[49px] text-[11px] text-[#444] pl-[5px] leading-[22px] border-t-2 border-t-[#5b8bd0] border-x border-[#999]">Watch1</div>
            <div className="flex-1 border border-[#a8a8a8]" />
          </div>
        </section>
      </div>

      {/* Status bar */}
      <div className="h-[27px] shrink-0 flex items-center justify-end pr-[2px] border-t-2 border-[#a9c3e8] text-[11px] text-[#222] bg-gradient-to-b from-[#eaf1fa] to-[#c9daf2]">
        <span className="mr-[7px]">Command Done</span>
        <Ico name="home" className="ml-[4px]" />
        <Ico name="grid" className="ml-[10px]" />
        <Ico name="blackDrop" className="ml-[3px] !w-[12px]" />
        <Ico name="arr1" className="ml-[6px]" />
        <Ico name="arr2" className="ml-[4px]" />
        <Ico name="expand" className="ml-[8px]" />
      </div>
    </div>
  );
}
